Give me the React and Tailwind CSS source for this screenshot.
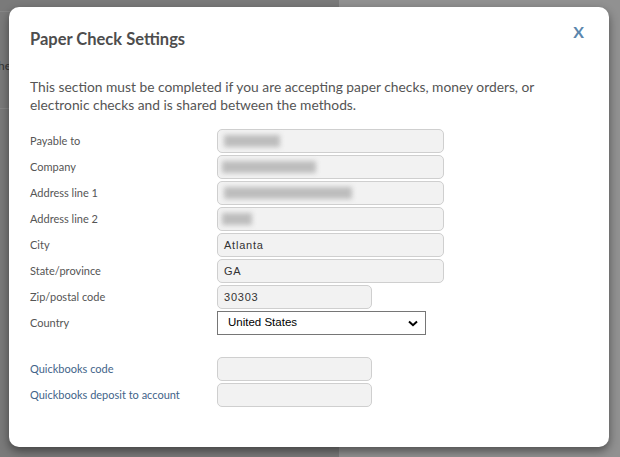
import React from "react";

const lato = { fontFamily: "Lato, 'Open Sans', sans-serif" };

function Blur({ w }) {
  return <div className="h-[12px] bg-[#bdbdbd] blur-[2.5px]" style={{ width: w }} />;
}

function Row({ label, children, blue }) {
  return (
    <div className="flex items-center h-[26px]">
      <div className={`w-[187px] text-[11px] ${blue ? "text-[#3f6489]" : "text-[#555]"}`}>{label}</div>
      {children}
    </div>
  );
}

function Input({ w = 227, value, blur, blurOffset = 6 }) {
  return (
    <div
      className="h-[24px] rounded-[5px] border border-[#cfcfcf] bg-[#f2f2f2] flex items-center text-[11px] text-[#333] tracking-[0.07em]"
      style={{ width: w, paddingLeft: blur ? blurOffset : 6, fontFamily: "'Liberation Sans', Arial, sans-serif" }}
    >
      {blur ? <Blur w={blur} /> : value}
    </div>
  );
}

export default function App() {
  return (
    <div className="relative w-[620px] h-[457px] overflow-hidden flex bg-[#7c7c7c]" style={lato}>
      <div className="w-[339px] h-full bg-[#7a7a7a] flex flex-col">
        <div className="h-[11px]" />
        <div className="h-px bg-[#868686]" />
        <div className="h-[48px]" />
        <div className="text-[12px] text-[#333] leading-none pl-0 -ml-[2px]">he</div>
        <div className="h-[36px]" />
        <div className="h-px bg-[#868686]" />
      </div>
      <div className="flex-1 h-full bg-[#919191]" />

      <div className="absolute left-[9px] top-[7px] w-[600px] h-[440px] bg-white rounded-[10px] shadow-[0_4px_10px_rgba(0,0,0,0.45)] pl-[21px] pr-[21px] pt-[22px]">
        <div className="flex justify-between items-start">
          <h2 className="text-[16.5px] font-bold text-[#4d4d4d] leading-[20px]">Paper Check Settings</h2>
          <button className="text-[16px] font-bold text-[#5b86ad] leading-[20px] mr-[4px] -mt-[7px]">X</button>
        </div>
        <p className="mt-[29px] text-[13.8px] leading-[18px] text-[#555]">
          This section must be completed if you are accepting paper checks, money orders, or
          <br />
          electronic checks and is shared between the methods.
        </p>
        <div className="mt-[14px] flex flex-col">
          <Row label="Payable to"><Input blur={56} /></Row>
          <Row label="Company"><Input blur={94} blurOffset={4} /></Row>
          <Row label="Address line 1"><Input blur={128} /></Row>
          <Row label="Address line 2"><Input blur={30} blurOffset={4} /></Row>
          <Row label="City"><Input value="Atlanta" /></Row>
          <Row label="State/province"><Input value="GA" /></Row>
          <Row label="Zip/postal code"><Input w={155} value="30303" /></Row>
          <Row label="Country">
            <div
              className="w-[209px] h-[24px] border border-[#767676] bg-white flex items-center justify-between pl-[10px] pr-[7px] text-[11.5px] text-black"
              style={{ fontFamily: "'Liberation Sans', Arial, sans-serif" }}
            >
              <span>United States</span>
              <svg width="10" height="7" viewBox="0 0 10 7"><path d="M1 1.5 L5 5.2 L9 1.5" stroke="#000" strokeWidth="2" fill="none" /></svg>
            </div>
          </Row>
          <div className="h-[20px]" />
          <Row label="Quickbooks code" blue><Input w={155} value="" /></Row>
          <Row label="Quickbooks deposit to account" blue><Input w={155} value="" /></Row>
        </div>
      </div>
    </div>
  );
}
